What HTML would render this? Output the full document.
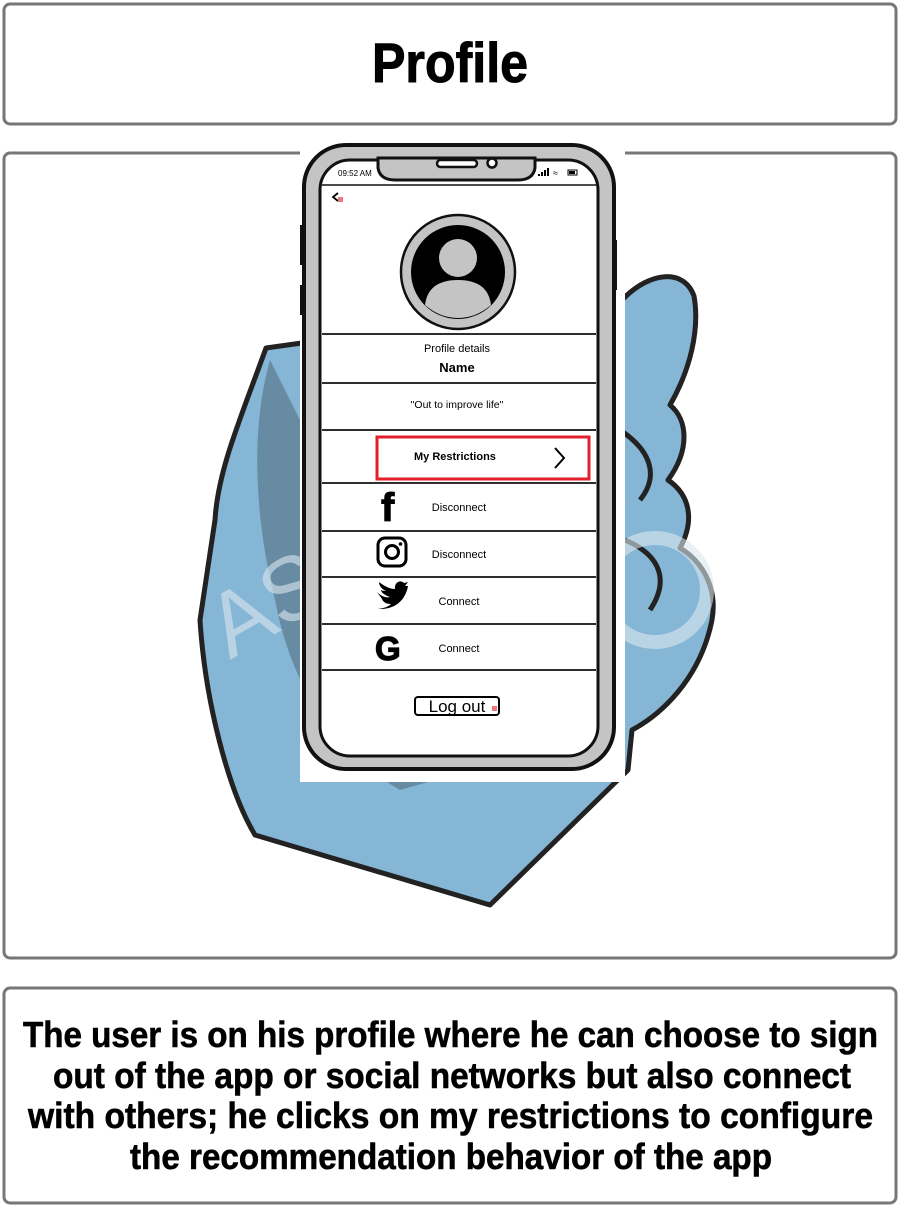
<!DOCTYPE html>
<html><head><meta charset="utf-8"><style>
html,body{margin:0;padding:0;background:#fff;width:900px;height:1208px;overflow:hidden}
svg{display:block}
text{font-family:"Liberation Sans",sans-serif}
</style></head><body>
<svg width="900" height="1208" viewBox="0 0 900 1208">
<rect x="0" y="0" width="900" height="1208" fill="#fff"/>
<rect x="4" y="4" width="892" height="120" rx="6" fill="#fff" stroke="#777" stroke-width="3"/>
<rect x="4" y="153" width="892" height="805" rx="6" fill="#fff" stroke="#777" stroke-width="3"/>
<rect x="4" y="988" width="892" height="215" rx="6" fill="#fff" stroke="#777" stroke-width="3"/>
<text x="450" y="82" text-anchor="middle" font-size="56" font-weight="bold" textLength="156" lengthAdjust="spacingAndGlyphs" fill="#000" stroke="#000" stroke-width="1">Profile</text>

<path d="M266,348 C240,420 218,470 215,520 L200,620 C205,700 228,790 255,835 L490,905 L628,770 L632,730 C660,715 700,680 712,620 C718,585 700,560 680,548 C695,520 690,495 668,480 C690,450 688,420 670,405 C690,370 700,330 694,296 C684,268 650,272 624,298 Z" fill="#86b6d6" stroke="#222" stroke-width="5" stroke-linejoin="round"/>
<path d="M270,360 C250,430 255,520 275,600 C290,680 330,750 400,790 L470,770 L300,420 Z" fill="#5e8196" opacity="0.8"/>
<path d="M620,430 C650,450 660,475 640,500 M625,540 C660,555 670,580 650,610" fill="none" stroke="#222" stroke-width="5"/>
<text x="230" y="660" font-size="90" fill="#dbe7ef" opacity="0.6" transform="rotate(-30 230 660)">AS</text>
<circle cx="655" cy="590" r="52" fill="none" stroke="#dbe7ef" stroke-width="14" opacity="0.6"/>

<rect x="300" y="143" width="325" height="639" fill="#fff"/>
<rect x="304" y="145" width="310" height="624" rx="42" fill="#c4c4c4" stroke="#111" stroke-width="4"/>
<rect x="320" y="160" width="278" height="596" rx="30" fill="#fff" stroke="#111" stroke-width="3"/>
<rect x="300" y="225" width="5" height="40" fill="#111"/>
<rect x="300" y="285" width="5" height="30" fill="#111"/>
<rect x="612" y="240" width="5" height="50" fill="#111"/>
<path d="M378,158 L378,168 Q380,180 395,180 L518,180 Q533,180 535,168 L535,158 Z" fill="#c4c4c4" stroke="#111" stroke-width="3"/>
<rect x="437" y="160" width="40" height="7" rx="3.5" fill="#fff" stroke="#111" stroke-width="2.5"/>
<circle cx="492" cy="163" r="4.5" fill="#fff" stroke="#111" stroke-width="2.5"/>
<text x="338" y="176" font-size="8" fill="#000">09:52 AM</text>
<path d="M538,176 h2 v-2 h-2z M541,176 h2v-4h-2z M544,176h2v-6h-2z M547,176h2v-8h-2z" fill="#000"/>
<text x="553" y="176" font-size="9">≈</text>
<rect x="568" y="170" width="9" height="5" fill="none" stroke="#000" stroke-width="1"/><rect x="569" y="171" width="6" height="3" fill="#000"/>
<line x1="322" y1="185" x2="596" y2="185" stroke="#111" stroke-width="1.5"/>
<path d="M338,193 L333,197 L338,201" fill="none" stroke="#000" stroke-width="1.8"/>
<rect x="338" y="197" width="5" height="5" fill="#e77"/>
<circle cx="458" cy="272" r="57" fill="#c4c4c4" stroke="#111" stroke-width="2.5"/>
<circle cx="458" cy="272" r="47" fill="#000"/>
<circle cx="458" cy="258" r="19" fill="#c4c4c4"/>
<path d="M425,305 Q428,280 458,280 Q488,280 491,305 Q476,318 458,318 Q440,318 425,305 Z" fill="#c4c4c4"/>
<g stroke="#111" stroke-width="1.8">
<line x1="322" y1="334" x2="596" y2="334"/><line x1="322" y1="383" x2="596" y2="383"/>
<line x1="322" y1="430" x2="596" y2="430"/><line x1="322" y1="483" x2="596" y2="483"/>
<line x1="322" y1="531" x2="596" y2="531"/><line x1="322" y1="577" x2="596" y2="577"/>
<line x1="322" y1="624" x2="596" y2="624"/><line x1="322" y1="670" x2="596" y2="670"/>
</g>
<text x="457" y="352" text-anchor="middle" font-size="11">Profile details</text>
<text x="457" y="372" text-anchor="middle" font-size="13" font-weight="bold">Name</text>
<text x="457" y="408" text-anchor="middle" font-size="10.5">"Out to improve life"</text>
<rect x="377" y="437" width="212" height="42" fill="#fff" stroke="#e3202a" stroke-width="3"/>
<text x="414" y="460" font-size="11" font-weight="bold">My Restrictions</text>
<path d="M555,448 L564,458 L555,468" fill="none" stroke="#000" stroke-width="2"/>
<text x="381" y="521" font-size="40" font-weight="bold" stroke="#000" stroke-width="1">f</text>
<text x="459" y="511" text-anchor="middle" font-size="11">Disconnect</text>
<rect x="378" y="538" width="28" height="28" rx="7" fill="none" stroke="#000" stroke-width="3"/>
<circle cx="392" cy="552" r="6.5" fill="none" stroke="#000" stroke-width="3"/>
<circle cx="400.5" cy="544" r="1.8" fill="#000"/>
<text x="459" y="558" text-anchor="middle" font-size="11">Disconnect</text>
<path d="M377,592 C382,597 387,598 390,597 C384,595 381,592 381,590 C383,591 385,591 386,591 C381,589 379,585 379,582 C384,586 390,589 395,589 C394,583 400,579 404,583 L408,582 L405,586 L408,586 C406,598 397,610 378,609 C384,608 388,607 391,604 C386,604 383,602 382,599 Z" fill="#000"/>
<text x="459" y="605" text-anchor="middle" font-size="11">Connect</text>
<text x="375" y="660" font-size="33" font-weight="bold" stroke="#000" stroke-width="1.2">G</text>
<text x="459" y="652" text-anchor="middle" font-size="11">Connect</text>
<rect x="415" y="697" width="84" height="18" rx="3" fill="#fff" stroke="#000" stroke-width="2"/>
<text x="457" y="712" text-anchor="middle" font-size="17">Log out</text>
<rect x="492" y="706" width="5" height="5" fill="#e77"/>

<g font-size="36" font-weight="bold" fill="#000" stroke="#000" stroke-width="0.6">
<text x="23" y="1047" textLength="855" lengthAdjust="spacingAndGlyphs">The user is on his profile where he can choose to sign</text>
<text x="53" y="1088" textLength="798" lengthAdjust="spacingAndGlyphs">out of the app or social networks but also connect</text>
<text x="28" y="1128" textLength="845" lengthAdjust="spacingAndGlyphs">with others; he clicks on my restrictions to configure</text>
<text x="130" y="1169" textLength="642" lengthAdjust="spacingAndGlyphs">the recommendation behavior of the app</text>
</g>
</svg>
</body></html>
